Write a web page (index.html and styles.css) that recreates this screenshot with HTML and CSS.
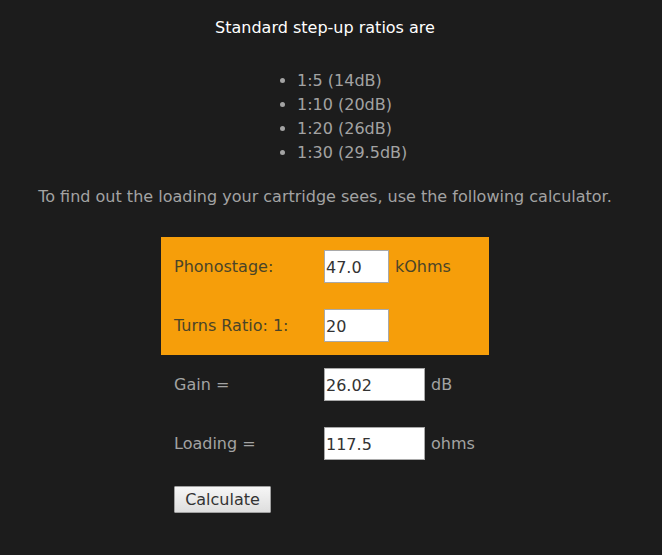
FILE: index.html
```html
<!DOCTYPE html>
<html lang="en">
<head>
  <meta charset="UTF-8">
  <meta name="viewport" content="width=device-width, initial-scale=1.0">
  <title>Step-up Calculator</title>
  <link rel="stylesheet" href="styles.css">
</head>
<body>
<div class="page">
  <p class="title">Standard step-up ratios are</p>
  <ul class="ratios">
    <li>1:5 (14dB)</li>
    <li>1:10 (20dB)</li>
    <li>1:20 (26dB)</li>
    <li>1:30 (29.5dB)</li>
  </ul>
  <p class="intro">To find out the loading your cartridge sees, use the following calculator.</p>

  <form class="calc">
    <div class="row orange">
      <label for="phono">Phonostage:</label>
      <input id="phono" class="short" type="text" value="47.0">
      <span class="unit">kOhms</span>
    </div>
    <div class="row orange">
      <label for="ratio">Turns Ratio: 1:</label>
      <input id="ratio" class="short" type="text" value="20">
      <span class="unit"></span>
    </div>
    <div class="row">
      <label for="gain">Gain =</label>
      <input id="gain" class="long" type="text" value="26.02">
      <span class="unit">dB</span>
    </div>
    <div class="row">
      <label for="load">Loading =</label>
      <input id="load" class="long" type="text" value="117.5">
      <span class="unit">ohms</span>
    </div>
    <div class="row">
      <button type="button" onclick="calc()">Calculate</button>
    </div>
  </form>
</div>

  <script>
    function calc() {
      var phono = parseFloat(document.getElementById("phono").value);
      var ratio = parseFloat(document.getElementById("ratio").value);
      var gain = 20 * Math.log10(ratio);
      var load = phono * 1000 / (ratio * ratio);
      document.getElementById("gain").value = gain.toFixed(2);
      document.getElementById("load").value = load.toFixed(1);
    }
  </script>
</body>
</html>
```

FILE: styles.css
```css
body {
    margin: 0;
    padding: 0;
    background-color: #1c1c1c;
    color: #a3a3a3;
    font-family: "DejaVu Sans", Verdana, sans-serif;
    font-size: 16px;
}
.page {
    width: 650px;
}
.title {
    color: #ffffff;
    text-align: center;
    margin: 19px 0 0 0;
    line-height: 18px;
}
.ratios {
    margin: 32px 0 0 0;
    padding: 0 0 0 297px;
    line-height: 24px;
}
.intro {
    text-align: center;
    margin: 20px 0 0 0;
    line-height: 24px;
}
.calc {
    width: 328px;
    margin: 28px 0 0 161px;
}
.row {
    display: grid;
    grid-template-columns: 144px auto auto;
    justify-content: start;
    align-items: center;
    column-gap: 6px;
    padding: 13px;
}
.orange {
    background-color: #f69e0a;
    color: #4a4428;
}
input {
    height: 33px;
    box-sizing: border-box;
    border: 1px solid #a9a9a9;
    background: #ffffff;
    color: #333333;
    font-family: "DejaVu Sans", Verdana, sans-serif;
    font-size: 16px;
    padding: 2px 1px 0 1px;
}
.short {
    width: 65px;
}
.long {
    width: 101px;
}
button {
    height: 27px;
    width: 97px;
    border: 1px solid #a0a0a0;
    border-radius: 1px;
    background: linear-gradient(#f6f6f6, #dedede);
    color: #333333;
    font-family: "DejaVu Sans", Verdana, sans-serif;
    font-size: 16px;
    padding: 0;
}
```
